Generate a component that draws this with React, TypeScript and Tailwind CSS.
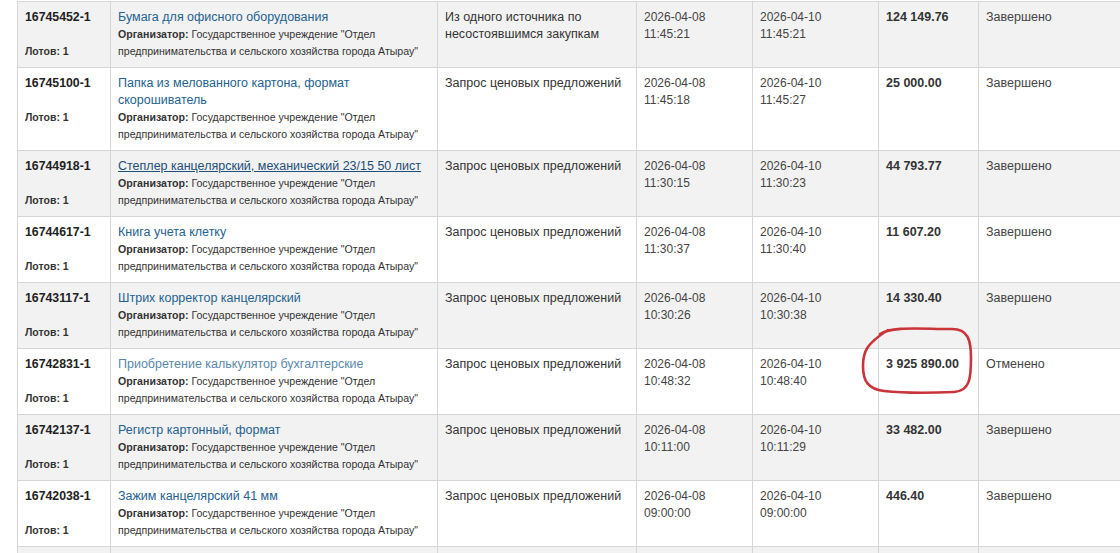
const lots = [
  {
    id: "16745452-1",
    title: "Бумага для офисного оборудования",
    method: "Из одного источника по несостоявшимся закупкам",
    start: ["2026-04-08", "11:45:21"],
    end: ["2026-04-10", "11:45:21"],
    amount: "124 149.76",
    status: "Завершено",
  },
  {
    id: "16745100-1",
    title: "Папка из мелованного картона, формат скорошиватель",
    method: "Запрос ценовых предложений",
    start: ["2026-04-08", "11:45:18"],
    end: ["2026-04-10", "11:45:27"],
    amount: "25 000.00",
    status: "Завершено",
  },
  {
    id: "16744918-1",
    title: "Степлер канцелярский, механический 23/15 50 лист",
    method: "Запрос ценовых предложений",
    start: ["2026-04-08", "11:30:15"],
    end: ["2026-04-10", "11:30:23"],
    amount: "44 793.77",
    status: "Завершено",
    hover: true,
  },
  {
    id: "16744617-1",
    title: "Книга учета клетку",
    method: "Запрос ценовых предложений",
    start: ["2026-04-08", "11:30:37"],
    end: ["2026-04-10", "11:30:40"],
    amount: "11 607.20",
    status: "Завершено",
  },
  {
    id: "16743117-1",
    title: "Штрих корректор канцелярский",
    method: "Запрос ценовых предложений",
    start: ["2026-04-08", "10:30:26"],
    end: ["2026-04-10", "10:30:38"],
    amount: "14 330.40",
    status: "Завершено",
  },
  {
    id: "16742831-1",
    title: "Приобретение калькулятор бухгалтерские",
    method: "Запрос ценовых предложений",
    start: ["2026-04-08", "10:48:32"],
    end: ["2026-04-10", "10:48:40"],
    amount: "3 925 890.00",
    status: "Отменено",
    visited: true,
  },
  {
    id: "16742137-1",
    title: "Регистр картонный, формат",
    method: "Запрос ценовых предложений",
    start: ["2026-04-08", "10:11:00"],
    end: ["2026-04-10", "10:11:29"],
    amount: "33 482.00",
    status: "Завершено",
  },
  {
    id: "16742038-1",
    title: "Зажим канцелярский 41 мм",
    method: "Запрос ценовых предложений",
    start: ["2026-04-08", "09:00:00"],
    end: ["2026-04-10", "09:00:00"],
    amount: "446.40",
    status: "Завершено",
  },
];

const cell = "border border-[#d6d6d6] align-top px-[7px] pt-[7px] pb-[7px]";

export default function App() {
  return (
    <div className="relative h-[553px] w-[1120px] overflow-hidden bg-white font-['Liberation_Sans',Arial,sans-serif] text-[12.5px] leading-[17px] text-[#333]">
      <table className="ml-[17px] mt-[1px] w-[1112px] table-fixed border-collapse">
        <colgroup>
          <col className="w-[93px]" />
          <col className="w-[327px]" />
          <col className="w-[199px]" />
          <col className="w-[116px]" />
          <col className="w-[126px]" />
          <col className="w-[100px]" />
          <col />
        </colgroup>
        <tbody>
          {lots.map((lot, i) => (
            <tr key={lot.id} className={i % 2 === 0 ? "bg-[#f2f2f2]" : "bg-white"}>
              <td className={`${cell} px-[6px]`}>
                <div className="text-[12.3px] font-bold text-[#222]">{lot.id}</div>
                <div className="h-[17px]" />
                <div className="text-[10.5px] font-bold text-[#333]">Лотов: 1</div>
              </td>
              <td className={cell}>
                <div
                  className={
                    lot.visited
                      ? "text-[#5a88aa]"
                      : lot.hover
                        ? "text-[#1d4f78] underline"
                        : "text-[#24628f]"
                  }
                >
                  {lot.title}
                </div>
                <div className="text-[10.6px] leading-[17px] text-[#333]">
                  <span className="font-bold">Организатор:</span> Государственное учреждение "Отдел
                  предпринимательства и сельского хозяйства города Атырау"
                </div>
              </td>
              <td className={cell}>{lot.method}</td>
              <td className={`${cell} px-[6px] text-[12px] text-[#444]`}>
                <div>{lot.start[0]}</div>
                <div>{lot.start[1]}</div>
              </td>
              <td className={`${cell} px-[6px] text-[12px] text-[#444]`}>
                <div>{lot.end[0]}</div>
                <div>{lot.end[1]}</div>
              </td>
              <td className={`${cell} font-bold text-[#333]`}>{lot.amount}</td>
              <td className={`${cell} text-[#444]`}>{lot.status}</td>
            </tr>
          ))}
          <tr className="bg-[#f2f2f2]">
            <td className={`${cell} h-[66px]`} />
            <td className={cell} />
            <td className={cell} />
            <td className={cell} />
            <td className={cell} />
            <td className={cell} />
            <td className={cell} />
          </tr>
        </tbody>
      </table>

      {/* hand-drawn red mark around the amount */}
      <svg
        className="pointer-events-none absolute left-[850px] top-[320px]"
        width="130"
        height="80"
        viewBox="0 0 130 80"
        fill="none"
      >
        <path
          d="M 30 14 C 42 6, 70 9, 102 9 C 118 9, 121 20, 121 38 C 121 58, 120 71, 104 72 C 80 73, 52 73, 34 71 C 18 69, 13 61, 13 46 C 13 32, 16 24, 38 10"
          stroke="#c41e26"
          strokeWidth="2.6"
          strokeLinecap="round"
          strokeLinejoin="round"
          opacity="0.9"
        />
      </svg>
    </div>
  );
}
